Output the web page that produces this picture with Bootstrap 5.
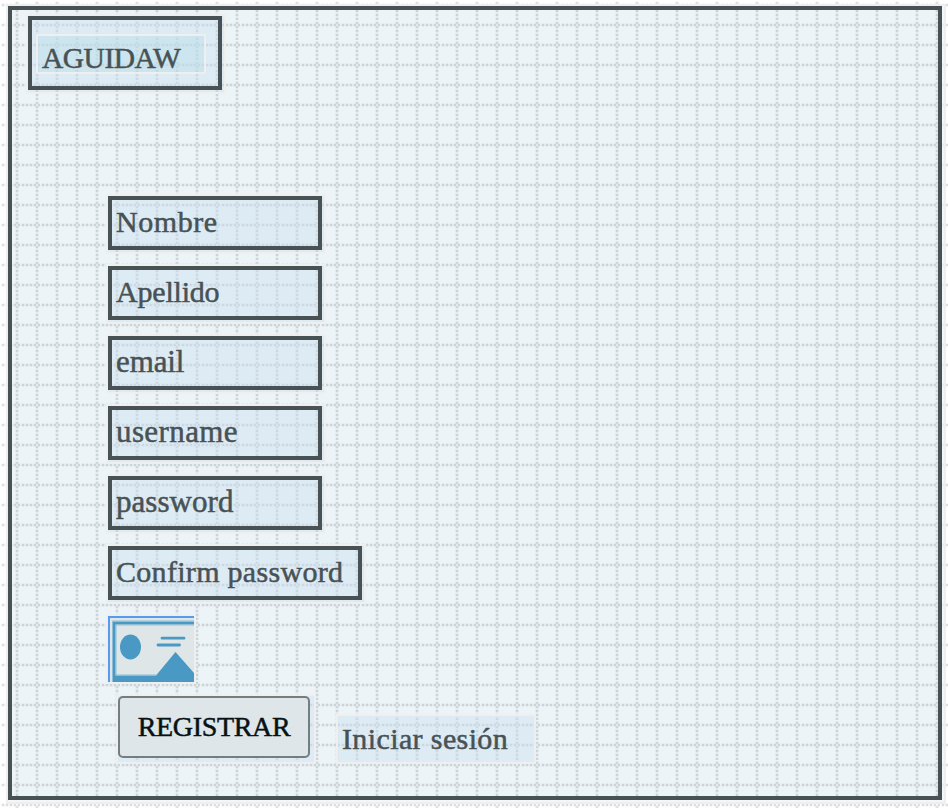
<!DOCTYPE html>
<html lang="es">
<head>
<meta charset="utf-8">
<meta name="viewport" content="width=device-width, initial-scale=1">
<title>AGUIDAW</title>
<link href="https://cdn.jsdelivr.net/npm/bootstrap@5.3.0/dist/css/bootstrap.min.css" rel="stylesheet">
<style>
:root{--ink:#485254;--halo:#efefef}
/* dotted 20px canvas grid, hollow crossings at (17,5) */
body,.sheet-inner{background-image:url("data:image/svg+xml,%3Csvg xmlns='http://www.w3.org/2000/svg' width='20' height='20'%3E%3Cg fill='%23000' fill-opacity='.13'%3E%3Cpath d='M1.700 3.700h2.600v2.600H1.700zM5.700 3.700h2.600v2.600H5.700zM9.700 3.700h2.600v2.600H9.700zM13.700 3.700h2.600v2.600h-2.600zM17.700 3.700h2.300v2.600h-2.300zM15.700 1.700h2.600v2h-2.600zM15.700 6.300h2.600v2h-2.600zM15.700 9.700h2.600v2.600h-2.600zM15.700 13.700h2.600v2.600h-2.600zM15.700 17.700h2.600v2.300h-2.600z'/%3E%3C/g%3E%3C/svg%3E")}
body{background-color:#fff;width:948px;height:808px;overflow:hidden;padding:4px 2px 4px 6px;color:var(--ink);font:30px/36px "Liberation Serif",serif;-webkit-text-stroke:.5px currentColor}
.halo{border:2px solid var(--halo);padding:0 2px 2px 0;background-color:rgba(205,224,240,.45)}
.sheet{width:940px;height:800px;background-color:rgba(239,243,246,.7)}
.sheet-inner{border:4px solid var(--ink);background-color:#ecf4f7;background-position:-12px -10px;padding:4px 14px}
.logo{width:200px;height:80px}
.frame{border:4px solid var(--ink)}
.logo .frame{padding:14px 0 0 4px}
.logo-text{width:170px;height:40px;border:2px solid var(--halo);background-color:rgba(180,219,230,.4);padding:5px 4px;font-size:29.500px;line-height:34px;letter-spacing:-.5px}
.fields{margin:100px 0 0 80px;gap:10px}
.field{width:220px;height:60px}
.field.wide{width:260px}
.field .frame{padding:2px 4px;line-height:40px}
.t-nombre{letter-spacing:.55px}.t-apellido{letter-spacing:-.2px}.t-email{font-size:31px;letter-spacing:-.1px}
.t-user{font-size:31px;letter-spacing:.4px}.t-pass{font-size:31px;letter-spacing:.05px}.t-confirm{letter-spacing:.3px}
.photo{width:90px;height:70px;border:2px solid var(--halo);line-height:0}
.actions{margin-left:10px;gap:20px}
.reg-box{width:200px;height:70px;padding:0 4px 4px 0}
.reg-btn,.reg-btn:hover{width:192px;height:62px;border:2px solid #747d80;border-radius:5px;background:#dee6e9;color:#081214;font:28px/36px "Liberation Serif",serif;letter-spacing:-.35px;padding:0}
.login{width:200px;height:50px;padding:5px 4px;letter-spacing:.38px;color:var(--ink)}
</style>
</head>
<body>
<main class="halo sheet d-flex">
  <div class="sheet-inner flex-grow-1">
    <header class="halo logo d-flex">
      <div class="frame flex-grow-1"><div class="logo-text text-nowrap">AGUIDAW</div></div>
    </header>
    <form class="fields d-flex flex-column align-items-start text-nowrap">
      <div class="halo field d-flex"><div class="frame flex-grow-1 t-nombre">Nombre</div></div>
      <div class="halo field d-flex"><div class="frame flex-grow-1 t-apellido">Apellido</div></div>
      <div class="halo field d-flex"><div class="frame flex-grow-1 t-email">email</div></div>
      <div class="halo field d-flex"><div class="frame flex-grow-1 t-user">username</div></div>
      <div class="halo field d-flex"><div class="frame flex-grow-1 t-pass">password</div></div>
      <div class="halo field wide d-flex"><div class="frame flex-grow-1 t-confirm">Confirm password</div></div>
      <div class="photo">
        <svg width="86" height="66" viewBox="0 0 86 66" role="img" aria-label="Imagen">
          <path fill="#dee6e7" d="M0 0h86v66H0z"/>
          <path fill="#4a98c4" d="M4.500 5.500H86V8.500H7.500V59.500H48L67.500 36L86 57V66H4.500z"/>
          <path fill="none" stroke="#8fbdd5" d="M86 5H4.500V66M86 9H8V59H48"/>
          <ellipse cx="22.500" cy="31" rx="10.500" ry="12.500" fill="#4a98c4"/>
          <path fill="none" stroke="#4a98c4" stroke-width="2.800" stroke-linecap="round" d="M54 22.200H76M50 29H71.500"/>
          <path fill="none" stroke="#559cf0" stroke-width="2" d="M1 66V1H86"/>
        </svg>
      </div>
      <div class="actions d-flex align-items-end">
        <div class="halo reg-box"><button type="button" class="btn reg-btn">REGISTRAR</button></div>
        <a class="halo login text-decoration-none" href="#">Iniciar sesión</a>
      </div>
    </form>
  </div>
</main>
<script src="https://cdn.jsdelivr.net/npm/bootstrap@5.3.0/dist/js/bootstrap.bundle.min.js"></script>
</body>
</html>
